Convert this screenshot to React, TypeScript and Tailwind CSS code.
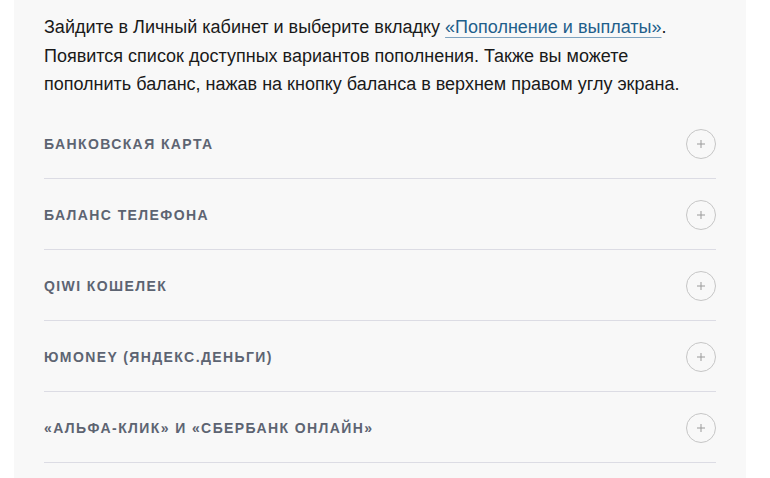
const items = [
  'Банковская карта',
  'Баланс телефона',
  'QIWI Кошелек',
  'ЮMoney (Яндекс.Деньги)',
  '«Альфа-Клик» и «Сбербанк Онлайн»',
]

export default function App() {
  return (
    <div className="min-h-[478px] bg-white font-['Liberation_Sans',Arial,sans-serif]">
      <div className="ml-[14px] w-[732px] min-h-[478px] bg-[#f8f8f8] px-[30px] pt-[13px]">
        <p className="text-[18px] leading-[28.5px] text-[#1a1a1a]">
          Зайдите в Личный кабинет и выберите вкладку{' '}
          <a href="#" className="text-[#1f5f8b] underline decoration-[#7fa3bf] underline-offset-[4px]">
            «Пополнение и выплаты»
          </a>
          .<br />
          Появится список доступных вариантов пополнения. Также вы можете
          <br />
          пополнить баланс, нажав на кнопку баланса в верхнем правом углу экрана.
        </p>
        <div className="mt-[9px]">
          {items.map((item) => (
            <div
              key={item}
              className="flex h-[71px] items-center justify-between border-b border-[#dcdce4] pt-[3px]"
            >
              <span className="text-[14px] font-bold uppercase tracking-[1.4px] text-[#5d6472]">
                {item}
              </span>
              <span className="flex h-[30px] w-[30px] items-center justify-center rounded-full border border-[#c6c6c6]">
                <svg width="10" height="10" viewBox="0 0 10 10">
                  <path d="M5 1v8M1 5h8" stroke="#9a9a9a" strokeWidth="1" />
                </svg>
              </span>
            </div>
          ))}
        </div>
      </div>
    </div>
  )
}
